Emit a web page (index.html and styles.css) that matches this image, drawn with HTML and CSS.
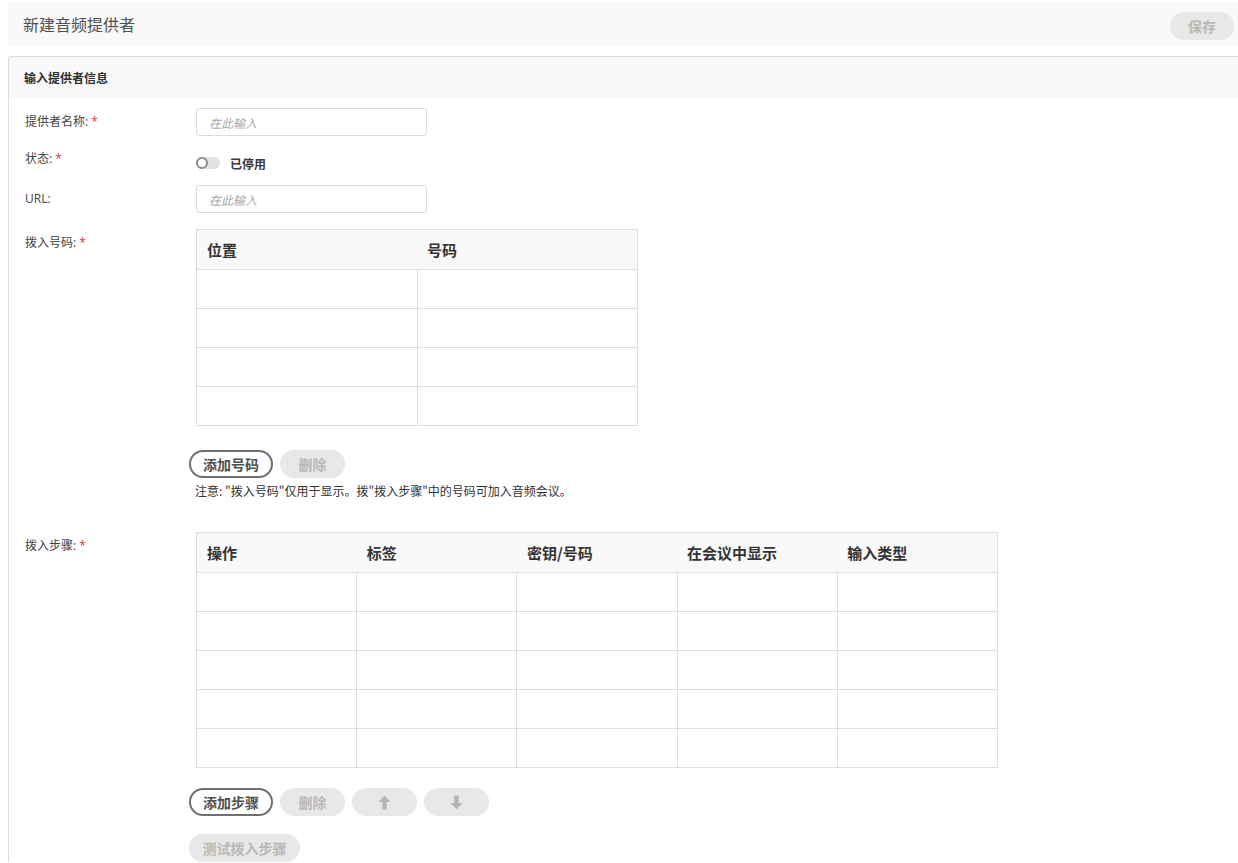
FILE: index.html
```html
<!DOCTYPE html>
<html lang="zh-CN">
<head>
<meta charset="utf-8">
<title>新建音频提供者</title>
<link rel="stylesheet" href="styles.css">
</head>
<body>
<div class="page">
  <header class="topbar">
    <h1 class="title">新建音频提供者</h1>
    <button class="btn btn-disabled btn-save">保存</button>
  </header>

  <section class="panel">
    <div class="panel-head">输入提供者信息</div>
    <div class="panel-body">
      <div class="row row-input">
        <div class="label">提供者名称: <span class="req">*</span></div>
        <div class="value"><input class="text" type="text" placeholder="在此输入"></div>
      </div>
      <div class="row row-status">
        <div class="label">状态: <span class="req">*</span></div>
        <div class="value toggle-wrap">
          <span class="toggle"><span class="knob"></span></span>
          <span class="toggle-text">已停用</span>
        </div>
      </div>
      <div class="row row-url">
        <div class="label">URL:</div>
        <div class="value"><input class="text" type="text" placeholder="在此输入"></div>
      </div>
      <div class="row row-numbers">
        <div class="label">拨入号码: <span class="req">*</span></div>
        <div class="value">
          <table class="grid grid-numbers">
            <colgroup><col class="col-half"><col class="col-half"></colgroup>
            <thead><tr><th>位置</th><th>号码</th></tr></thead>
            <tbody>
              <tr><td></td><td></td></tr>
              <tr><td></td><td></td></tr>
              <tr><td></td><td></td></tr>
              <tr><td></td><td></td></tr>
            </tbody>
          </table>
          <div class="btn-row btn-row-numbers">
            <button class="btn btn-outline btn-w84">添加号码</button>
            <button class="btn btn-disabled btn-w65">删除</button>
          </div>
          <p class="note">注意: "拨入号码"仅用于显示。拨"拨入步骤"中的号码可加入音频会议。</p>
        </div>
      </div>
      <div class="row row-steps">
        <div class="label">拨入步骤: <span class="req">*</span></div>
        <div class="value">
          <table class="grid grid-steps">
            <colgroup><col class="col-fifth"><col class="col-fifth"><col class="col-fifth"><col class="col-fifth"><col class="col-fifth"></colgroup>
            <thead><tr><th>操作</th><th>标签</th><th>密钥/号码</th><th>在会议中显示</th><th>输入类型</th></tr></thead>
            <tbody>
              <tr><td></td><td></td><td></td><td></td><td></td></tr>
              <tr><td></td><td></td><td></td><td></td><td></td></tr>
              <tr><td></td><td></td><td></td><td></td><td></td></tr>
              <tr><td></td><td></td><td></td><td></td><td></td></tr>
              <tr><td></td><td></td><td></td><td></td><td></td></tr>
            </tbody>
          </table>
          <div class="btn-row btn-row-steps">
            <button class="btn btn-outline btn-w84">添加步骤</button>
            <button class="btn btn-disabled btn-w65">删除</button>
            <button class="btn btn-disabled btn-w65" aria-label="上移">
              <svg width="13" height="15" viewBox="0 0 13 15"><path d="M6.5 0.5 L12.5 7 L8.7 7 L8.7 14.5 L4.3 14.5 L4.3 7 L0.5 7 Z" fill="#b5b5b5"/></svg>
            </button>
            <button class="btn btn-disabled btn-w65" aria-label="下移">
              <svg width="13" height="15" viewBox="0 0 13 15"><path d="M6.5 14.5 L12.5 8 L8.7 8 L8.7 0.5 L4.3 0.5 L4.3 8 L0.5 8 Z" fill="#b5b5b5"/></svg>
            </button>
          </div>
          <div class="btn-row btn-row-test">
            <button class="btn btn-disabled btn-w111">测试拨入步骤</button>
          </div>
        </div>
      </div>
    </div>
  </section>
</div>
</body>
</html>
```

FILE: styles.css
```css
html, body {
  margin: 0;
  padding: 0;
  background: #ffffff;
  overflow: hidden;
}

body {
  font-family: "Open Sans", "Noto Sans CJK SC", sans-serif;
  color: #333333;
}

.page {
  padding: 2px 0 0 8px;
}

.topbar {
  display: flex;
  align-items: center;
  justify-content: space-between;
  height: 44px;
  background: #f9f9f9;
  padding: 0 4px 0 15px;
}

.title {
  margin: 0;
  font-size: 16px;
  font-weight: normal;
  color: #505050;
  font-family: "Noto Sans CJK SC", sans-serif;
  line-height: 20px;
  margin-top: -1px;
}

.btn {
  font-family: "Noto Sans CJK SC", sans-serif;
  font-size: 14px;
  font-weight: bold;
  height: 28px;
  border-radius: 14px;
  border: none;
  padding: 0;
  display: inline-flex;
  align-items: center;
  justify-content: center;
  line-height: 1;
  box-sizing: border-box;
}

.btn-save {
  width: 64px;
  margin-top: 4px;
}

.btn-disabled {
  background: #e8e8e8;
  color: #b8b8b8;
}

.btn-outline {
  background: #ffffff;
  border: 2px solid #707070;
  color: #505050;
}

.btn-w84 { width: 84px; }
.btn-w65 { width: 65px; }
.btn-w111 { width: 111px; }

.panel {
  margin-top: 10px;
  border-top: 1px solid #dddddd;
  border-left: 1px solid #dddddd;
  border-top-left-radius: 3px;
}

.panel-head {
  height: 41px;
  background: #f9f9f9;
  font-family: "Noto Sans CJK SC", sans-serif;
  font-size: 12px;
  font-weight: bold;
  color: #2e2e2e;
  display: flex;
  align-items: center;
  padding-left: 15px;
  border-top-left-radius: 3px;
}

.panel-body {
  padding: 10px 0 0 16px;
}

.row {
  display: grid;
  grid-template-columns: 171px 1fr;
}

.label {
  font-family: "Open Sans", "Noto Sans CJK SC", sans-serif;
  font-size: 12px;
  color: #444444;
  line-height: 14px;
  padding-top: 7px;
}

.req {
  color: #d9363e;
}

.text {
  width: 231px;
  height: 28px;
  box-sizing: border-box;
  border: 1px solid #dcdcdc;
  border-radius: 3px;
  padding: 0 12px;
  font-family: "Noto Sans CJK SC", sans-serif;
  font-size: 12px;
  color: #333;
  display: block;
  margin: 0;
}

.text::placeholder {
  color: #a8a8a8;
  font-style: italic;
}

.row-input { margin-bottom: 7px; }

.row-status {
  height: 35px;
  margin-bottom: 7px;
}

.row-status .label {
  padding-top: 9px;
}

.toggle-wrap {
  display: flex;
  align-items: center;
  padding-top: 14px;
  height: 12px;
}

.toggle {
  position: relative;
  width: 24px;
  height: 12px;
  border-radius: 6px;
  background: #e2e2e2;
  display: inline-block;
}

.knob {
  position: absolute;
  left: 0;
  top: 0;
  width: 12px;
  height: 12px;
  box-sizing: border-box;
  border-radius: 50%;
  border: 2px solid #8a8a8a;
  background: #ffffff;
}

.toggle-text {
  margin-left: 10px;
  font-family: "Noto Sans CJK SC", sans-serif;
  font-size: 12px;
  font-weight: bold;
  color: #3a3a3a;
}

.row-url { margin-bottom: 16px; }

.grid {
  border-collapse: collapse;
  table-layout: fixed;
  border: 1px solid #dddddd;
}

.grid th {
  height: 39px;
  background: #f9f9f9;
  text-align: left;
  padding: 0 0 0 10px;
  font-family: "Noto Sans CJK SC", sans-serif;
  font-size: 15px;
  font-weight: bold;
  color: #333333;
  border-bottom: 1px solid #dddddd;
}

.grid td {
  height: 38px;
  padding: 0;
  border: 1px solid #dddddd;
}

.grid-numbers { width: 442px; }
.col-half { width: 50%; }

.grid-steps { width: 802px; }
.col-fifth { width: 20%; }

.btn-row {
  display: flex;
  gap: 7px;
  margin-left: -7px;
}

.btn-row-numbers { margin-top: 24px; }

.note {
  margin: 6px 0 0 -1px;
  font-family: "Noto Sans CJK SC", sans-serif;
  font-size: 12px;
  line-height: 14px;
  color: #333333;
}

.row-numbers { margin-bottom: 34px; }

.btn-row-steps { margin-top: 20px; }

.btn-row-test { margin-top: 18px; }
```
